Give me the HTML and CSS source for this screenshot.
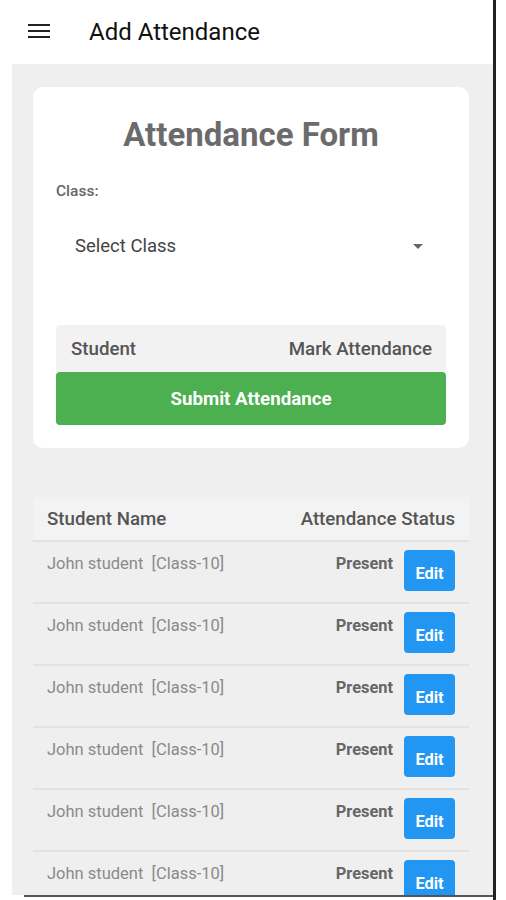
FILE: index.html
```html
<!DOCTYPE html>
<html lang="en">
<head>
    <meta charset="UTF-8">
    <meta name="viewport" content="width=device-width, initial-scale=1.0">
    <title>Add Attendance</title>
    <link rel="stylesheet" href="styles.css">
</head>
<body>
    <div class="screen">
        <!-- app bar -->
        <div class="appbar">
            <svg class="menu-icon" width="22" height="14" viewBox="0 0 22 14">
                <rect x="0" y="0" width="22" height="2" fill="#222"/>
                <rect x="0" y="6" width="22" height="2" fill="#222"/>
                <rect x="0" y="12" width="22" height="2" fill="#222"/>
            </svg>
            <span class="appbar-title">Add Attendance</span>
        </div>

        <div class="content">
            <!-- form card -->
            <div class="card">
                <h1 class="form-title">Attendance Form</h1>
                <label class="field-label">Class:</label>
                <div class="select">
                    <span>Select Class</span>
                    <svg width="10" height="5" viewBox="0 0 10 5"><path d="M0 0 L10 0 L5 5 Z" fill="#666"/></svg>
                </div>
                <div class="mark-head">
                    <span>Student</span>
                    <span>Mark Attendance</span>
                </div>
                <button type="button" class="submit-btn">Submit Attendance</button>
            </div>

            <!-- attendance list -->
            <div class="list">
                <div class="list-head">
                    <span>Student Name</span>
                    <span>Attendance Status</span>
                </div>
                <div class="list-row">
                    <span class="name">John student&nbsp; [Class-10]</span>
                    <div class="status"><span>Present</span><button type="button" class="edit-btn">Edit</button></div>
                </div>
                <div class="list-row">
                    <span class="name">John student&nbsp; [Class-10]</span>
                    <div class="status"><span>Present</span><button type="button" class="edit-btn">Edit</button></div>
                </div>
                <div class="list-row">
                    <span class="name">John student&nbsp; [Class-10]</span>
                    <div class="status"><span>Present</span><button type="button" class="edit-btn">Edit</button></div>
                </div>
                <div class="list-row">
                    <span class="name">John student&nbsp; [Class-10]</span>
                    <div class="status"><span>Present</span><button type="button" class="edit-btn">Edit</button></div>
                </div>
                <div class="list-row">
                    <span class="name">John student&nbsp; [Class-10]</span>
                    <div class="status"><span>Present</span><button type="button" class="edit-btn">Edit</button></div>
                </div>
                <div class="list-row">
                    <span class="name">John student&nbsp; [Class-10]</span>
                    <div class="status"><span>Present</span><button type="button" class="edit-btn">Edit</button></div>
                </div>
            </div>
        </div>
        <div class="bottom-line"></div>
    </div>
</body>
</html>
```

FILE: styles.css
```css
* {
    box-sizing: border-box;
}
body {
    margin: 0;
    background-color: #fff;
    font-family: Roboto, "Noto Sans", sans-serif;
}
.screen {
    width: 496px;
    height: 900px;
    border-right: 3px solid #222;
    overflow: hidden;
}
.appbar {
    height: 64px;
    display: flex;
    align-items: center;
    padding-left: 28px;
}
.menu-icon {
    margin-top: -2px;
}
.appbar-title {
    margin-left: 39px;
    font-size: 24px;
    font-weight: 400;
    color: #111;
}
.content {
    height: 831px;
    margin-left: 12px;
    padding: 23px 24px 0 21px;
    background-color: #efefef;
    overflow: hidden;
}
.card {
    background-color: #fff;
    border-radius: 10px;
    padding: 23px;
}
.form-title {
    margin: 7px 0 0;
    height: 36px;
    line-height: 36px;
    text-align: center;
    font-size: 33px;
    font-weight: 700;
    color: #6b6b6b;
}
.field-label {
    display: block;
    margin-top: 29px;
    line-height: 18px;
    font-size: 15.5px;
    font-weight: 500;
    color: #666;
}
.select {
    display: flex;
    justify-content: space-between;
    align-items: center;
    height: 48px;
    margin-top: 22px;
    padding: 0 23px 0 19px;
    font-size: 18.5px;
    color: #444;
}
.mark-head {
    display: flex;
    justify-content: space-between;
    align-items: center;
    height: 47px;
    margin-top: 55px;
    padding: 0 14px 0 15px;
    background-color: #f2f2f2;
    border-radius: 4px 4px 0 0;
    font-size: 18.7px;
    font-weight: 500;
    color: #555;
}
.submit-btn {
    display: block;
    width: 100%;
    height: 53px;
    border: none;
    border-radius: 4px;
    background-color: #4caf50;
    color: #fff;
    font-family: inherit;
    font-size: 18.7px;
    font-weight: 700;
}
.list {
    margin-top: 49px;
}
.list-head {
    display: flex;
    justify-content: space-between;
    align-items: center;
    height: 45px;
    padding: 0 14px;
    background-color: #f3f3f3;
    border-bottom: 2px solid #e2e2e2;
    font-size: 18.7px;
    font-weight: 500;
    color: #555;
}
.list-row {
    display: flex;
    justify-content: space-between;
    align-items: flex-start;
    height: 62px;
    padding: 8px 14px 0;
    border-bottom: 2px solid #e2e2e2;
}
.name {
    margin-top: 5px;
    font-size: 16.5px;
    line-height: 18px;
    color: #8a8a8a;
}
.status {
    display: flex;
    align-items: flex-start;
    gap: 11px;
    font-size: 16.4px;
    line-height: 18px;
    font-weight: 700;
    color: #666;
}
.status span {
    margin-top: 5px;
}
.edit-btn {
    width: 51px;
    height: 41px;
    padding: 5px 0 0;
    border: none;
    border-radius: 4px;
    background-color: #2196f3;
    color: #fff;
    font-family: inherit;
    font-size: 16.4px;
    font-weight: 700;
}
.bottom-line {
    height: 2px;
    margin-left: 24px;
    background-color: #555;
}
```
